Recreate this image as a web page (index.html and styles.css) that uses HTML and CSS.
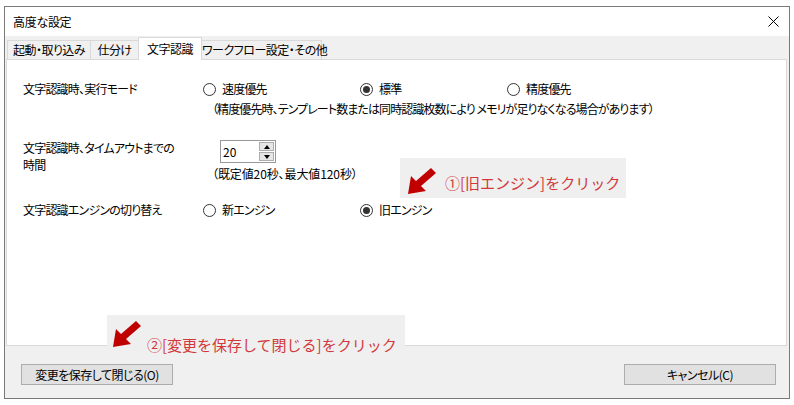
FILE: index.html
```html
<!DOCTYPE html>
<html lang="ja">
<head>
<meta charset="utf-8">
<title>高度な設定</title>
<link rel="stylesheet" href="styles.css">
</head>
<body>
<div class="window">
  <div class="titlebar">
    <span class="title">高度な設定</span>
    <svg class="close" width="11" height="11" viewBox="0 0 11 11"><path d="M0.5 0.5 L10.5 10.5 M10.5 0.5 L0.5 10.5" stroke="#000" stroke-width="1" fill="none"/></svg>
  </div>
  <div class="body">
    <div class="tabs">
      <div class="tab t1">起動・取り込み</div>
      <div class="tab t2">仕分け</div>
      <div class="tab t3 active">文字認識</div>
      <div class="tab t4">ワークフロー設定・その他</div>
    </div>
    <div class="panel">
      <div class="row r1">
        <div class="label">文字認識時、実行モード</div>
        <div class="field">
          <div class="radios">
            <div class="opt w1"><span class="radio"></span><span>速度優先</span></div>
            <div class="opt w2"><span class="radio on"></span><span>標準</span></div>
            <div class="opt"><span class="radio"></span><span>精度優先</span></div>
          </div>
          <div class="note">（精度優先時、テンプレート数または同時認識枚数により メモリが足りなくなる場合があります）</div>
        </div>
      </div>
      <div class="row r2">
        <div class="label two">文字認識時、タイムアウトまでの<br>時間</div>
        <div class="field">
          <div class="spin">
            <span class="spin-val">20</span>
            <span class="spin-btns">
              <span class="sb up"><span class="tri-up"></span></span>
              <span class="sb down"><span class="tri-down"></span></span>
            </span>
          </div>
          <div class="note n2">（既定値20秒、最大値120秒）</div>
        </div>
      </div>
      <div class="row r3">
        <div class="label">文字認識エンジンの切り替え</div>
        <div class="field">
          <div class="radios">
            <div class="opt w1"><span class="radio"></span><span>新エンジン</span></div>
            <div class="opt w2"><span class="radio on"></span><span>旧エンジン</span></div>
          </div>
        </div>
      </div>
    </div>
    <div class="footer">
      <div class="btn">変更を保存して閉じる(O)</div>
      <div class="btn">キャンセル(C)</div>
    </div>
  </div>
  <div class="callout c1">
    <svg class="arrow" width="30" height="28" viewBox="0 0 30 28"><polygon points="1,27 4,9 9,14 24,1 29,6 14,19 19,24" fill="#c00000"/></svg>
    <span class="ctext">①[旧エンジン]をクリック</span>
  </div>
  <div class="callout c2">
    <svg class="arrow" width="30" height="28" viewBox="0 0 30 28"><polygon points="1,27 4,9 9,14 24,1 29,6 14,19 19,24" fill="#c00000"/></svg>
    <span class="ctext">②[変更を保存して閉じる]をクリック</span>
  </div>
</div>
</body>
</html>
```

FILE: styles.css
```css
* { box-sizing: border-box; }
html, body { margin: 0; padding: 0; background: #fff; }
body {
  font-family: "Noto Sans CJK JP", "Noto Sans", sans-serif;
  font-size: 12px;
  color: #000;
  font-feature-settings: "palt";
}
.window {
  position: relative;
  margin: 6px 0 0 4px;
  width: 786px;
  height: 393px;
  border: 1px solid #7a7a7a;
  background: #f0f0f0;
  display: flex;
  flex-direction: column;
}
.titlebar {
  height: 29px;
  background: #fff;
  display: flex;
  align-items: center;
  justify-content: space-between;
  padding: 0 10px 0 8px;
}
.title { line-height: 16px; letter-spacing: -0.3px; }
.close { display: block; }
.body { flex: 1; display: flex; flex-direction: column; }
.tabs {
  height: 23px;
  display: flex;
  align-items: flex-end;
  padding-left: 2px;
}
.tab {
  height: 19px;
  border: 1px solid #d9d9d9;
  border-bottom: none;
  background: #f0f0f0;
  text-align: center;
  line-height: 17px;
  white-space: nowrap;
  letter-spacing: -0.5px;
}
.t1 { width: 84px; }
.t2 { width: 49px; margin-left: -1px; }
.t3 { width: 64px; margin-left: -1px; }
.t4 { width: 121px; margin-left: -1px; }
.tab.active {
  height: 23px;
  margin-bottom: -1px;
  background: #fff;
  position: relative;
  z-index: 2;
  line-height: 22px;
}
.panel {
  position: relative;
  z-index: 1;
  margin-left: 1px;
  width: 781px;
  height: 287px;
  border: 1px solid #d9d9d9;
  background: #fff;
  padding: 20px 0 0 16px;
  letter-spacing: -0.8px;
}
.row {
  display: grid;
  grid-template-columns: 180px 1fr;
}
.r2 { margin-top: 21px; }
.r3 { margin-top: 18px; }
.label { line-height: 18px; white-space: nowrap; }
.label.two { line-height: 17px; }
.radios { display: flex; line-height: 18px; }
.opt { display: flex; align-items: center; gap: 6px; white-space: nowrap; }
.w1 { width: 157px; }
.w2 { width: 147px; }
.radio {
  width: 13px;
  height: 13px;
  border: 1px solid #333;
  border-radius: 50%;
  display: flex;
  align-items: center;
  justify-content: center;
  flex: none;
}
.radio.on::after {
  content: "";
  width: 7px;
  height: 7px;
  border-radius: 50%;
  background: #333;
}
.note {
  margin-top: 2px;
  margin-left: 9px;
  line-height: 18px;
  white-space: nowrap;
  letter-spacing: -0.9px;
}
.spin {
  margin-top: 1px;
  margin-left: 17px;
  width: 56px;
  height: 23px;
  border: 1px solid #999;
  display: flex;
  align-items: center;
  justify-content: space-between;
  padding: 1px 1px 1px 2px;
  letter-spacing: 0;
}
.spin-val { line-height: 16px; }
.spin-btns {
  width: 15px;
  height: 19px;
  display: flex;
  flex-direction: column;
  gap: 1px;
}
.sb {
  flex: 1;
  background: #e6e6e6;
  border: 1px solid #adadad;
  display: flex;
  align-items: center;
  justify-content: center;
}
.tri-up {
  width: 0; height: 0;
  border-left: 3.5px solid transparent;
  border-right: 3.5px solid transparent;
  border-bottom: 4px solid #000;
}
.tri-down {
  width: 0; height: 0;
  border-left: 3.5px solid transparent;
  border-right: 3.5px solid transparent;
  border-top: 4px solid #000;
}
.note.n2 { margin-top: 2px; letter-spacing: -0.1px; }
.footer {
  flex: 1;
  display: flex;
  justify-content: space-between;
  align-items: flex-start;
  padding: 18px 13px 0 16px;
}
.btn {
  width: 152px;
  height: 21px;
  background: #e1e1e1;
  border: 1px solid #adadad;
  text-align: center;
  line-height: 19px;
  letter-spacing: -0.5px;
}
.callout {
  position: absolute;
  z-index: 5;
  background: #efefef;
  display: flex;
  align-items: flex-start;
}
.arrow { display: block; flex: none; }
.ctext {
  color: #d2383a;
  font-size: 15px;
  line-height: 20px;
  white-space: nowrap;
  font-feature-settings: normal;
}
.c1 {
  left: 395px; top: 151px;
  width: 226px; height: 40px;
  padding: 9px 0 0 7px;
  gap: 8px;
}
.c1 .ctext { margin-top: 6px; }
.c2 {
  left: 102px; top: 308px;
  width: 298px; height: 36px;
  padding: 5px 0 0 5px;
  gap: 5px;
}
.c2 .ctext { margin-top: 15px; }
```
